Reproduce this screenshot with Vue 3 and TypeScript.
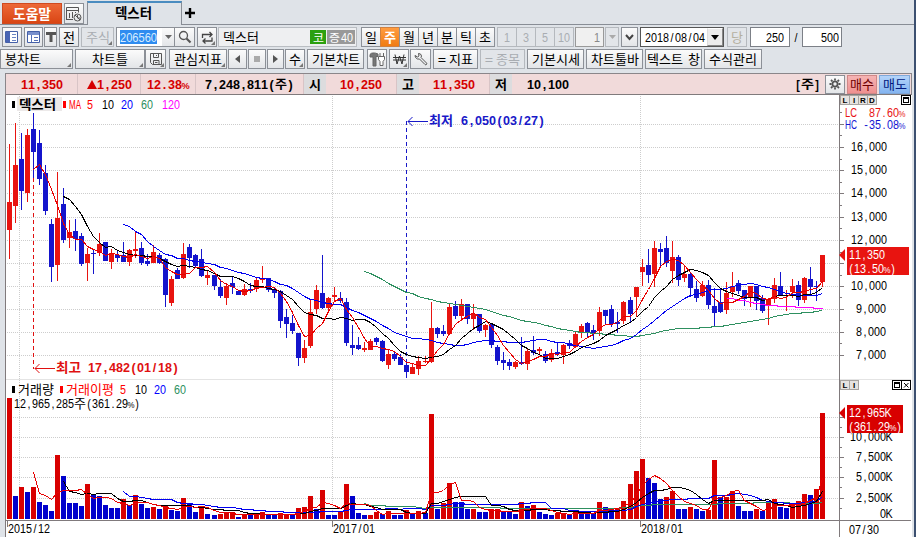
<script setup lang="ts">
import { h } from 'vue'

type Txt = { t: string; w: number; s?: number | string; bold?: boolean }
type Label = [string, number, number, number, string?, number?, boolean?]

// Draws a label fitted to a width. Numbers sit in equal cells, other words are stretched as a whole.
const fitted = (t: string, x: number, y: number, w: number, size: number, bold: boolean, fill: string) => {
  const common = { 'font-weight': bold ? 700 : 400, fill, 'font-family': "'Liberation Sans','Noto Sans CJK KR',sans-serif" }
  if (!/\d/.test(t) && t.length > 1 || /[가-힣]/.test(t)) {
    return h('text', { ...common, x, y, 'font-size': size, textLength: w, lengthAdjust: 'spacingAndGlyphs' }, t)
  }
  const cell = w / t.length
  const sx = cell / 7.25
  const xs = [...t].map((_, i) => ((i + 0.5) * cell / sx).toFixed(2)).join(' ')
  return h('text', { ...common, x: xs, y: 0, 'font-size': 13, 'text-anchor': 'middle', transform: `translate(${x} ${y}) scale(${sx.toFixed(3)} 1)` },
    [...t].map(c => (c === '%' ? h('tspan', { 'font-size': 9.5 }, c) : c)))
}

const T = (p: Txt) =>
  h('svg', { width: p.w, height: 14, viewBox: `0 0 ${p.w} 14`, overflow: 'visible', class: 'txt' }, [
    fitted(p.t, 0, 11.6, p.w, Number(p.s ?? 13), !!p.bold, 'currentColor'),
  ])
T.props = { t: String, w: Number, s: [Number, String], bold: Boolean }

const G = (p: { l: Label }) => {
  const [t, x, w, y, fill = '#000', size = 13, bold = false] = p.l
  return fitted(t, x, y + 4.6, w, size, bold, fill)
}
G.props = ['l']

// Weekly candles: direction, high, body top, body bottom, low (thirds of a pixel below the panel top)
const raw = `R150,324,408,495 R87,213,336,387 B117,195,291,348 R105,123,297,324 B57,105,174,252 B108,147,255,273
B213,237,351,363 B375,390,519,564 R234,372,513,561 B282,330,438,447 R378,414,432,462 B375,411,435,471
B417,426,510,516 R462,480,507,561 B468,477,480,540 R417,450,477,486 B444,444,501,501 R465,477,504,525
B471,483,492,504 B444,483,504,504 R465,468,504,516 R414,465,471,492 B444,462,507,513 B480,501,510,516
R453,474,507,507 B477,483,507,510 B492,495,603,639 R546,555,627,636 B522,528,555,555 R447,480,552,555
B450,459,492,522 B480,483,516,519 B465,495,546,549 R528,543,552,573 B543,543,576,588 B555,579,606,612
R567,576,612,633 B546,567,579,600 B588,591,603,603 R570,585,603,606 B567,585,591,597 R549,558,585,594
R516,555,558,567 B552,552,588,594 B579,585,597,612 B588,591,681,702 B645,669,690,732 B663,687,711,720
B717,717,792,816 R738,762,792,807 R615,654,756,762 R573,588,645,660 B483,597,642,645 R609,612,642,651
R579,603,609,621 B594,612,621,627 B612,624,747,756 B693,753,762,783 B729,753,765,768 R744,762,768,774
R735,741,768,768 B729,732,744,753 B738,741,801,804 R768,780,813,825 B771,780,795,801 B780,789,813,813
B804,813,834,852 R810,819,840,840 R786,801,825,843 R786,801,804,807 R624,702,804,807 B699,702,720,732
B693,711,720,726 R630,639,720,720 B621,636,666,675 R615,630,666,681 B630,630,675,690 R630,660,675,708
B660,660,711,717 R690,693,708,729 B687,690,753,762 B753,759,801,813 B774,798,807,828 B795,804,816,828
R801,804,819,825 B729,804,810,813 R765,771,810,828 B726,768,777,783 R759,765,771,783 B771,780,801,807
R765,777,798,804 B747,774,780,786 R750,753,783,810 B738,747,756,765 R711,720,759,762 R690,696,717,732
B684,687,714,729 B693,708,720,738 R639,654,711,726 B648,648,666,693 B633,645,690,699 B654,684,690,717
R621,624,681,690 B609,618,660,687 R579,579,609,669 R495,519,534,576 B465,513,543,567 R441,462,540,579
B447,465,474,516 B426,462,507,519 R441,489,531,567 B483,489,558,576 R513,540,552,564 B537,540,582,609
B561,585,612,624 R561,573,606,609 B558,573,633,645 B582,636,657,696 B588,624,654,657 R564,597,648,660
R534,576,594,609 B558,567,591,600 B588,588,615,636 R576,576,612,639 B576,576,621,648 B603,612,651,657
R612,615,636,693 R552,573,615,627 B534,576,603,606 R588,603,606,651 R555,576,594,612 B561,573,618,636
R549,552,618,627 B519,555,579,606 B561,576,579,621 R483,483,564,579`

const rawVol = `R66 B360 R333 B348 R333 B378 B387 B405 R237 B300 B381 B381 B390 R324 B357 B360 B387 B396 B396 R369
B387 R357 B384 B396 R393 B399 R390 B402 B405 R366 B384 B408 R390 B414 B417 R414 R408 R408 B423 R414
B417 R411 R408 B417 B417 R411 R417 B414 R396 R393 R360 B399 R342 B417 B417 R405 R324 B360 B411 B417
R417 R408 B414 R405 B417 B417 R402 B411 R405 B411 R114 B399 R381 R321 B378 B378 B399 R399 B408 B408
R399 R399 B408 B405 B414 R378 B390 R387 B408 B414 B417 R411 R411 B417 R405 B411 B411 B411 R378 B393
B402 R396 R375 R324 R285 R249 B306 B321 B369 R363 R345 B399 B399 R393 B399 B405 R402 R252 B363 R363
R345 B390 B405 B405 R399 B405 R375 R369 B393 B396 R384 R375 R354 B357 R339 R111`

const slotX = (i: number) => 9 + 6 * i + (i >= 34 ? 1 : 0) + (i >= 69 ? 1 : 0) + (i >= 103 ? 1 : 0)

const candles = raw.split(/\s+/).map((s, i) => {
  const v = s.slice(1).split(',').map(n => 94 + Number(n) / 3)
  return { up: s[0] === 'R', x: slotX(i), hi: v[0], top: v[1], bot: v[2], lo: v[3] }
})
const bars = rawVol.split(/\s+/).map((s, i) => ({ up: s[0] === 'R', x: slotX(i), y: 376 + Number(s.slice(1)) / 3 }))

const average = (v: number[], n: number) => {
  const out: string[] = []
  for (let i = n - 1; i < v.length; i++) {
    const m = v.slice(i - n + 1, i + 1).reduce((a, b) => a + b, 0) / n
    out.push(`${slotX(i) + 0.5},${Math.round(m) + 0.5}`)
  }
  return out.join(' ')
}
const closes = candles.map(c => (c.up ? c.top : c.bot))
const vols = bars.map(b => b.y)
const colors: [number, string][] = [[120, '#f0f'], [60, '#2e9060'], [20, '#0000f0'], [10, '#000'], [5, '#e80000']]
const priceMa = colors.map(([n, c]) => ({ c, p: average(closes, n) }))
const volMa = colors.slice(1).map(([n, c]) => ({ c, p: average(vols, n) }))

const priceGrid = [124, 147, 170, 193, 217, 240, 263, 286, 309, 332, 355]
const volGrid = [417, 437, 457, 477, 498]
const timeGrid = [19, 332, 640]
const minor = [112, 135, 159, 182, 205, 228, 252, 275, 297, 320, 343, 427, 447, 467, 487, 508]

// text, x, width, vertical centre, colour, size, bold
const labels: Label[] = [
  ['16,000', 851, 36, 146], ['15,000', 851, 36, 169], ['14,000', 851, 36, 192], ['13,000', 851, 36, 216],
  ['12,000', 851, 36, 239], ['10,000', 851, 36, 285], ['9,000', 856, 30, 308], ['8,000', 856, 30, 331],
  ['7,000', 856, 30, 354], ['LC', 845, 12, 112, '#e81414'], ['87.60%', 869, 36, 112, '#e81414'],
  ['HC', 845, 12, 124, '#1414d2'], ['-35.08%', 863, 42, 124, '#1414d2'],
  ['10,000K', 850, 42, 436], ['7,500K', 856, 36, 456], ['5,000K', 856, 36, 476], ['2,500K', 856, 36, 497],
  ['0K', 880, 12, 513], ['07/30', 849, 30, 529],
  ['2015/12', 8, 42, 528], ['2017/01', 333, 42, 528], ['2018/01', 641, 42, 528],
  ['MA', 69, 12, 104, '#f00'], ['5', 87, 6, 104, '#f00'], ['10', 102, 12, 104], ['20', 121, 12, 104, '#00f'],
  ['60', 141, 12, 104, '#2e9060'], ['120', 162, 18, 104, '#f0f'],
  ['거래량', 18, 36, 389.5, '#000', 13], ['거래이평', 66, 48, 389.5, '#f00', 13], ['5', 120, 6, 389, '#f00'],
  ['10', 135, 12, 389], ['20', 154, 12, 389, '#00f'], ['60', 174, 12, 389, '#2e9060'],
  ['12,965,285', 14, 60, 403], ['주', 74, 12, 403.5, '#000', 13], ['(361.29%)', 86, 54, 403],
  ['최고', 56, 25, 367.5, '#e01010', 13, true], ['17,482(01/18)', 88, 91, 367, '#e01010', 13, true],
  ['최저', 429, 24, 120.5, '#1818c8', 13, true], ['6,050(03/27)', 461, 84, 120, '#1818c8', 13, true],
]
const tags: Label[] = [
  ['11,350', 849, 36, 254, '#fff'], ['(13.50%)', 848, 48, 268, '#fff'],
  ['12,965K', 849, 42, 412, '#fff'], ['(361.29%)', 848, 54, 426, '#fff'],
]
const periods = ['일', '주', '월', '년', '분', '틱', '초']
const steps = ['1', '3', '5', '10']
</script>

<template>
  <div class="app">
    <header class="tabs">
      <div class="help"><T t="도움말" :w="38" s="13.5" bold /></div>
      <div class="btn tabicon">
        <svg width="18" height="18" viewBox="0 0 18 18" fill="none" stroke="#555"><path d="M1.5 14.5v-12h12v5M1.5 5.5h12M4.500 13V8M7.500 13V7M10.500 8V7M1 14.500h7" /><circle cx="12.500" cy="12.500" r="3.500" /><path d="M10 10l5 5M12.500 10v3h3" /></svg>
      </div>
      <div class="tab"><T t="덱스터" :w="37" s="13.5" bold /></div>
      <div class="plus"><svg width="10" height="10"><path d="M5 0v10M0 5h10" stroke="#000" stroke-width="2.400" /></svg></div>
    </header>

    <div class="row row1">
      <div class="btn"><svg width="14" height="12" fill="none"><path d="M.5.5h12v11H.5z" fill="#fff" stroke="#4560a8" /><path d="M1 1h4v10H1z" fill="#4864b4" /><path d="M7 3.500h4M7 6.500h4M7 9.500h4" stroke="#6984c4" /></svg></div>
      <div class="btn tight"><svg width="14" height="12" fill="none"><path d="M.5.5h12v11H.5z" fill="#fff" stroke="#4560a8" /><path d="M1 1h11v3H1z" fill="#7890cc" /><path d="M4.500 4v7M7 6.500h4M7 9.500h4" stroke="#5470b8" /></svg></div>
      <div class="btn"><svg width="10" height="10"><path d="M0 0h10v3H6.500v7h-3V3H0z" fill="#555" /></svg></div>
      <div class="btn"><T t="전" :w="12" s="13" /></div>
      <div class="btn off corner"><T t="주식" :w="24" s="13" /></div>
      <div class="code"><span><T t="206560" :w="37" /></span></div>
      <div class="btn flat"><svg width="7" height="4"><path d="M0 0h7L3.500 4z" fill="#666" /></svg></div>
      <div class="btn"><svg width="14" height="14" fill="none" stroke="#555"><circle cx="5.500" cy="5.500" r="4" stroke-width="1.300" /><path d="M8.500 8.500l4 4" stroke-width="2.200" /></svg></div>
      <div class="btn tight corner"><svg width="13" height="13" fill="none" stroke="#444" stroke-width="1.300"><path d="M1.500 7V3.500h9M8.500 1l2.500 2.500L8.500 6M11 6.500V10H2M4.500 7.500L2 10l2.500 2.500" /></svg></div>
      <div class="name">
        <T t="덱스터" :w="36" s="13" />
        <div class="badges"><span class="ko"><T t="코" :w="11" s="11.5" /></span><span class="jeung"><T t="증" :w="11" s="11.5" /><T t="40" :w="12" /></span></div>
      </div>
      <div class="group seven">
        <div v-for="p in periods" :key="p" class="btn seg" :class="{ on: p === '주' }"><T :t="p" :w="12" s="13" :bold="p === '주'" /></div>
      </div>
      <div class="group four">
        <div v-for="s in steps" :key="s" class="btn seg off"><T :t="s" :w="s.length * 6" /></div>
      </div>
      <div class="input dim"><T t="1" :w="6" /></div>
      <div class="btn off"><svg width="7" height="4"><path d="M0 0h7L3.500 4z" fill="#aaa" /></svg></div>
      <div class="btn"><svg width="9" height="7" fill="none" stroke="#444" stroke-width="2"><path d="M1 1l3.500 4L8 1" /></svg></div>
      <div class="date"><T t="2018/08/04" :w="60" /><i><svg width="8" height="5"><path d="M0 0h8L4 5z" /></svg></i></div>
      <div class="btn off dang"><T t="당" :w="12" s="13" /></div>
      <div class="input"><T t="250" :w="18" /></div>
      <div class="slash"><T t="/" :w="6" /></div>
      <div class="input last"><T t="500" :w="18" /></div>
    </div>

    <div class="row row2">
      <div class="btn start corner"><T t="봉차트" :w="36" s="13" /></div>
      <div class="btn corner tight"><T t="차트틀" :w="36" s="13" /></div>
      <div class="btn save corner"><svg width="14" height="14" fill="none" stroke="#555"><path d="M1.500 1.500h11v11h-9l-2-2zM4.500 1.500v4h5v-4M4.500 12V8.500h5.500V12M6 10.500h2.500M7.500 3v1" /></svg></div>
      <div class="btn corner tight"><T t="관심지표" :w="48" s="13" /></div>
      <div class="btn tight"><svg width="5" height="8"><path d="M5 0v8L0 4z" fill="#555" /></svg></div>
      <div class="btn tight"><svg width="6" height="6"><path d="M0 0h6v6H0z" fill="#aaa" /></svg></div>
      <div class="btn tight"><svg width="5" height="8"><path d="M0 0v8l5-4z" fill="#555" /></svg></div>
      <div class="btn corner"><T t="수" :w="12" s="13" /></div>
      <div class="btn wide"><T t="기본차트" :w="48" s="13" /></div>
      <div class="btn"><svg width="16" height="15" fill="none" stroke="#666"><path d="M1 2.500C2 .5 6 .5 9 2v2.500H7V14H4V5H1z" fill="#777" /><path d="M11 1v3M14.500 1v3M9.500 4.500h6v3l-1.500 2v4h-3v-4l-1.500-2z" fill="#fff" /></svg></div>
      <div class="btn corner tight"><svg width="13" height="11" fill="none" stroke="#333"><path d="M2 .5l2 9.500L6.500 2 9 10l2-9.500M0 3.500h13M0 6h13" /></svg></div>
      <div class="btn"><svg width="14" height="14" fill="none" stroke="#555"><path d="M4.500 1.500l2 .5 1 2-.5 1.500 5.500 5.500c1 1-.5 2.500-1.500 1.500L5.500 7 3.500 7 1.500 5.500l-.5-2 2.500 1.500L5 4z" /></svg></div>
      <div class="btn eq"><T t="=" :w="8" /><T t="지표" :w="24" s="13" /></div>
      <div class="btn eq off"><T t="=" :w="8" /><T t="종목" :w="24" s="13" /></div>
      <div class="btn"><T t="기본시세" :w="48" s="13" /></div>
      <div class="btn"><T t="차트툴바" :w="48" s="13" /></div>
      <div class="btn"><T t="텍스트" :w="36" s="13" /><span class="sp" /><T t="창" :w="12" s="13" /></div>
      <div class="btn"><T t="수식관리" :w="48" s="13" /></div>
    </div>

    <div class="quote">
      <div class="c red"><T t="11,350" :w="42" bold /></div>
      <div class="c red"><svg width="10" height="9"><path d="M5 0l5 9H0z" fill="#d60000" /></svg><T t="1,250" :w="35" bold /></div>
      <div class="c red"><T t="12.38%" :w="42" bold /></div>
      <div class="c"><T t="7,248,811(" :w="70" bold /><T t="주" :w="12" s="12" bold /><T t=")" :w="7" bold /></div>
      <div class="c k"><T t="시" :w="12" s="13" bold /></div>
      <div class="c red"><T t="10,250" :w="42" bold /></div>
      <div class="c k"><T t="고" :w="12" s="13" bold /></div>
      <div class="c red"><T t="11,350" :w="42" bold /></div>
      <div class="c k"><T t="저" :w="12" s="13" bold /></div>
      <div class="c last"><T t="10,100" :w="42" bold /></div>
      <div class="side">
        <div class="wk"><T t="[" :w="6" bold /><T t="주" :w="13" s="12.5" bold /><T t="]" :w="6" bold /></div>
        <div class="btn gear"><svg width="12" height="12" viewBox="-6 -6 12 12" fill="none" stroke="#555"><circle r="2.600" stroke-width="1.800" /><path d="M0-5.500v2M0 3.500v2M-5.500 0h2M3.500 0h2M-4-4l1.400 1.400M4-4L2.600-2.600M-4 4l1.400-1.400M4 4L2.600 2.600" stroke-width="1.800" /></svg></div>
        <div class="btn buy"><T t="매수" :w="24" s="13" /></div>
        <div class="btn sell"><T t="매도" :w="24" s="13" /></div>
      </div>
    </div>

    <svg class="chart" width="907" height="443" viewBox="5 94 907 443">
      <g shape-rendering="crispEdges" fill="none">
        <rect x="5" y="94" width="907" height="443" fill="#fff" />
        <g stroke="#cdcdcd" stroke-dasharray="1 1">
          <path v-for="y in priceGrid.concat(volGrid)" :key="y" :d="`M7 ${y + .5}H839`" />
          <path v-for="x in timeGrid" :key="x" :d="`M${x + .5} 96V519`" />
        </g>
        <path d="M6 379.500H911" stroke="#e4e4e4" />
        <path d="M5.500 94V537M5 94.500H912M5 520.500H911M839.500 94V537" stroke="#807a7c" />
        <path v-for="y in priceGrid.concat(volGrid)" :key="'m' + y" :d="`M839 ${y + .5}h5`" stroke="#807a7c" />
        <path v-for="y in minor" :key="'n' + y" :d="`M839 ${y + .5}h3`" stroke="#807a7c" />
        <path d="M7.500 520v7M332.500 520v7M640.500 520v7" stroke="#807a7c" />

        <path d="M33.500 178V369" stroke="#e01010" stroke-dasharray="4 3" />
        <path d="M406.500 121V366" stroke="#1818c8" stroke-dasharray="4 3" />

        <g v-for="c in candles" :key="c.x" :fill="c.up ? '#e81410' : '#1414cc'">
          <rect :x="c.x" :y="c.hi" width="1" :height="c.lo - c.hi" />
          <rect :x="c.x - 2" :y="c.top" width="5" :height="c.bot - c.top" />
        </g>
        <polyline v-for="m in priceMa" :key="m.c" :points="m.p" :stroke="m.c" />

        <rect v-for="b in bars" :key="'v' + b.x" :x="b.x - 2" :y="b.y" width="5" :height="519 - b.y" :fill="b.up ? '#d80000' : '#0000cc'" />
        <polyline v-for="m in volMa" :key="m.c" :points="m.p" :stroke="m.c" />

        <rect x="17" y="97" width="45" height="14" fill="#ece9e9" />
        <path d="M12 101h3v7h-3zM12 386h3v7h-3z" fill="#000" />
        <path d="M63 101h3v7h-3zM60 386h3v7h-3z" fill="#f00" />
      </g>
      <g fill="none">
        <path d="M55 368.500H35M39.500 364l-4.500 4.500 4.500 4.500" stroke="#e01010" />
        <path d="M428 121.500H408M412.500 117l-4.500 4.500 4.500 4.500" stroke="#1818c8" />
      </g>
      <G :l="['덱스터', 19, 37, 104.5, '#000', 13, true]" />
      <G v-for="(l, i) in labels" :key="'l' + i" :l="l" />
      <path d="M847 247h62v28h-62zM845 249v12l-6-6z" fill="#e81410" />
      <path d="M847 405h56v28h-56zM845 407v12l-6-6z" fill="#d80000" />
      <G v-for="(l, i) in tags" :key="'t' + i" :l="l" />
      <g shape-rendering="crispEdges" fill="#e6e3e0" stroke="#a8a4a0">
        <path d="M840.500 95.500h9v9h-9zM849.500 95.500h9v9h-9zM858.500 95.500h9v9h-9zM867.500 95.500h9v9h-9zM840.500 380.500h9v9h-9zM849.500 380.500h9v9h-9z" />
        <path d="M901.500 95.500h9v9h-9zM892.500 380.500h9v9h-9zM901.500 380.500h9v9h-9z" fill="#fff" stroke="#000" />
        <path d="M903.500 98.500h5v4h-5zM903 97.500h6M894.500 383.500h5v4h-5zM894 382.500h6" fill="none" stroke="#000" />
      </g>
      <path d="M904 383l4.500 4.500M908.500 383l-4.500 4.500" stroke="#000" />
      <g font-family="'Liberation Sans',sans-serif" font-size="8" font-weight="700" text-anchor="middle">
        <text x="845" y="103">L</text><text x="854" y="103">I</text><text x="863" y="103">R</text><text x="872" y="103">D</text>
        <text x="845" y="388">L</text><text x="854" y="388">I</text>
      </g>
    </svg>
  </div>
</template>

<style>
body { margin: 0; overflow: hidden; background: #dfe3e8; }
.txt { display: block; flex: none; }
</style>

<style scoped>
.app { width: 916px; height: 537px; box-sizing: border-box; background: #dfe3e8; border-right: 2px solid #3c5070; color: #000; overflow: hidden; }
.tabs { height: 25px; display: flex; box-sizing: border-box; padding: 3px 0 0 2px; background: linear-gradient(#888d95, #888d95) 0 24px / 100% 1px no-repeat; }
.help { width: 60px; height: 21px; display: flex; align-items: center; justify-content: center; color: #fff; background: linear-gradient(#ee6a3a, #d84412); box-shadow: inset 0 0 0 1px #cf4a20; }
.tabicon { width: 20px; height: 21px; margin-left: 2px; }
.tab { width: 95px; height: 24px; margin-top: -2px; box-sizing: border-box; border: 1px solid #888d95; border-top: 2px solid #4a8cc0; border-bottom: 0; background: #dfe3e8; display: flex; align-items: center; justify-content: center; padding: 0 2px 2px 0; }
.plus { padding: 5px 0 0 3px; }
.plus svg { display: block; }
.btn { box-sizing: border-box; display: flex; align-items: center; justify-content: center; border: 1px solid #8c9097; background: linear-gradient(#fbfbfb, #e3e5e8); position: relative; margin-right: 2px; }
.tabs .tabicon { margin-right: 3px; }
.row { display: grid; }
.row1 { height: 20px; margin-top: 2px; padding-left: 2px; grid-template-columns: 22px 20px 15px 22px 35px 46px 13px 22px 21px 143px 136px 78px 30px 16px 19px 87px 23px 40px 12px 40px; }
.row2 { height: 20px; margin-top: 2px; grid-template-columns: 75px 71px 23px 59px 20px 19px 18px 22px 60px 22px 21px 23px 47px 47px 59px 59px 59px 58px; }
.tight { margin-right: 1px; }
.row2 .btn:last-child { margin-right: 0; }
.save { margin-right: 3px; margin-left: -1px; }
.wide { margin-right: 3px; }
.eq { gap: 3px; }
.start { justify-content: flex-start; padding-left: 4px; }
.off { color: #a9adb2; border-color: #b5b9be; background: #e2e5e9; }
.dang { color: #b5b0a0; margin-right: 3px; }
.corner::after { content: ''; position: absolute; right: 1px; bottom: 1px; border: 2px solid; border-color: transparent #777 #777 transparent; }
.code { background: #fff; border: 1px solid #8c9097; border-right: 0; display: flex; align-items: center; padding-left: 3px; }
.code span { background: #2f8cf0; color: #d8ecff; height: 14px; }
.flat { margin: 0; border-left: 0; }
.row1 .flat + .btn { border-left: 0; }
.name { border: 1px solid #b9bdc2; margin-right: 4px; background: #eeeff1; display: flex; align-items: center; justify-content: space-between; padding: 0 1px 0 4px; }
.badges { display: flex; gap: 1px; color: #fff; }
.badges span { display: flex; align-items: center; justify-content: center; height: 14px; }
.ko { width: 16px; background: #2ca010; }
.jeung { width: 28px; background: #999; gap: 1px; }
.group { display: grid; }
.seven { grid-template-columns: repeat(7, 19px); margin-right: 1px; }
.four { grid-template-columns: repeat(4, 19px); margin-right: 2px; }
.seg { margin-right: -1px; }
.on { background: linear-gradient(#ff9c40, #f07c14); color: #fff; border-color: #d08040; }
.input { background: #fff; border: 1px solid #7c8087; display: flex; align-items: center; justify-content: flex-end; padding-right: 5px; }
.input.last { padding-right: 2px; }
.dim { background: #f0f0f0; color: #888; padding-right: 3px; margin-right: 1px; border-color: #999; }
.slash { display: flex; align-items: center; justify-content: center; }
.date { background: #fff; border: 1px solid #555; margin-right: 3px; display: flex; align-items: center; justify-content: space-between; padding: 0 0 0 4px; }
.date i { width: 16px; height: 100%; box-sizing: border-box; display: flex; align-items: center; justify-content: center; background: #ececec; border: 1px solid #888; border-top-color: #fff; border-left-color: #ddd; }
.sp { width: 5px; }
.quote { height: 21px; margin: 4px 0 0 5px; width: 907px; box-sizing: border-box; border: 1px solid #8a868a; border-bottom: 0; background: #f1dada; display: grid; grid-template-columns: 72px 63px 55px 108px 22px 71px 22px 71px 22px 72px 1fr; }
.c { display: flex; align-items: center; justify-content: center; border-right: 1px solid #d8c4c6; box-sizing: border-box; }
.c.last { border: 0; }
.red { color: #d60000; }
.k { background: #dcdcde; border: 0; }
.side { display: flex; align-items: center; justify-content: flex-end; }
.wk { display: flex; margin-right: 5px; }
.side .btn { height: 19px; }
.side .gear { width: 20px; }
.side .buy { width: 30px; background: linear-gradient(#f6b4b4, #ee9090); border-color: #d08888; color: #700000; }
.side .sell { width: 31px; background: linear-gradient(#b4d4fa, #84b4f0); border-color: #80a8d8; color: #001880; margin-right: 1px; }
.chart { display: block; margin-left: 5px; }
</style>
